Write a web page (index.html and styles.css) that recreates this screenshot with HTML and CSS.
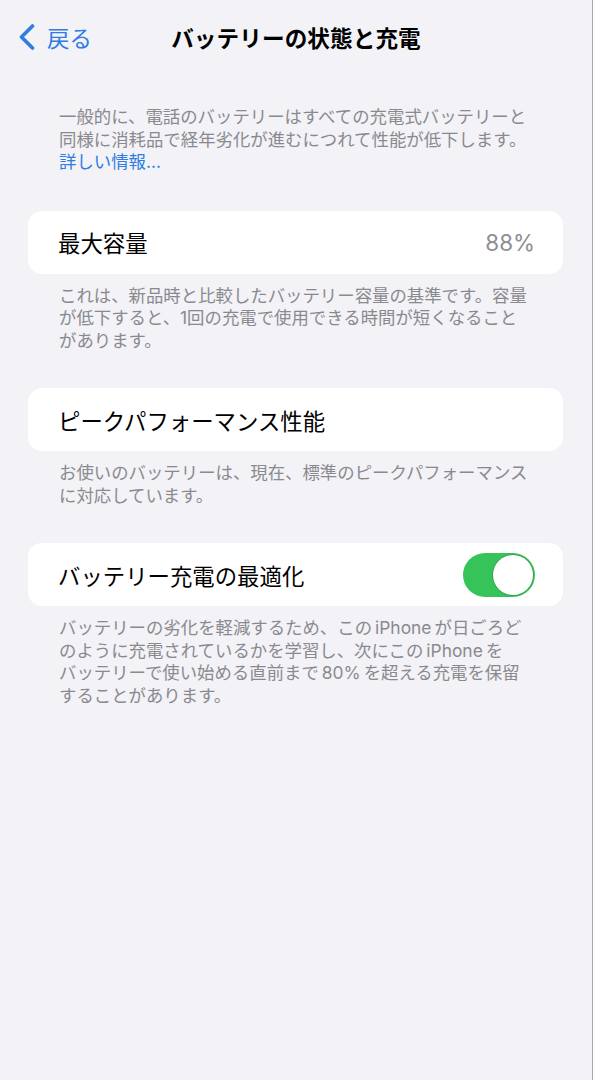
FILE: index.html
```
<!DOCTYPE html>
<html lang="ja">
<head>
    <meta charset="UTF-8">
    <meta name="viewport" content="width=device-width, initial-scale=1.0">
    <title>バッテリーの状態と充電</title>
    <link rel="stylesheet" href="styles.css">
</head>
<body>
    <div class="page">
        <div class="nav">
            <a class="back" href="#">
                <svg class="chevron" width="16" height="26" viewBox="0 0 16 26">
                    <path d="M13.5 2 L2.5 13 L13.5 24" fill="none" stroke="currentColor" stroke-width="3.6" stroke-linecap="round" stroke-linejoin="round"/>
                </svg>
                <span>戻る</span>
            </a>
            <h1>バッテリーの状態と充電</h1>
            <div></div>
        </div>

        <p class="intro">
            一般的に、電話のバッテリーはすべての充電式バッテリーと<br>
            同様に消耗品で経年劣化が進むにつれて性能が低下します。<br>
            <a href="#">詳しい情報...</a>
        </p>

        <div class="section">
            <div class="card">
                <span class="label">最大容量</span>
                <span class="value">88%</span>
            </div>
            <p class="note">
                これは、新品時と比較したバッテリー容量の基準です。容量<br>
                が低下すると、1回の充電で使用できる時間が短くなること<br>
                があります。
            </p>
        </div>

        <div class="section">
            <div class="card">
                <span class="label">ピークパフォーマンス性能</span>
            </div>
            <p class="note">
                お使いのバッテリーは、現在、標準のピークパフォーマンス<br>
                に対応しています。
            </p>
        </div>

        <div class="section">
            <div class="card">
                <span class="label">バッテリー充電の最適化</span>
                <button class="toggle on" onclick="this.classList.toggle('on')"><span class="knob"></span></button>
            </div>
            <p class="note">
                バッテリーの劣化を軽減するため、この<span class="latin">iPhone</span>が日ごろど<br>
                のように充電されているかを学習し、次にこの<span class="latin">iPhone</span>を<br>
                バッテリーで使い始める直前まで<span class="latin">80%</span>を超える充電を保留<br>
                することがあります。
            </p>
        </div>
    </div>
</body>
</html>
```

FILE: styles.css
```
body {
    margin: 0;
    padding: 0;
    background-color: #f2f2f7;
    font-family: Inter, "Noto Sans CJK JP", sans-serif;
    color: #000;
}
.page {
    min-height: 100vh;
    border-right: 1px solid #a8a8ad;
    box-sizing: border-box;
}
.nav {
    height: 74px;
    display: grid;
    grid-template-columns: 1fr auto 1fr;
    align-items: center;
}
.back {
    display: flex;
    align-items: center;
    gap: 12px;
    padding-left: 19px;
    color: #2f7de1;
    text-decoration: none;
    font-size: 22.4px;
}
.chevron {
    display: block;
}
h1 {
    margin: 0;
    font-size: 22.6px;
    font-weight: 700;
    letter-spacing: 0.1px;
}
.intro {
    margin: 32px 0 37px;
    padding-left: 59px;
    font-size: 17.4px;
    line-height: 22.5px;
    color: #8a8a8e;
}
.intro a {
    color: #2f7de1;
    text-decoration: none;
}
.section {
    margin-bottom: 36px;
}
.card {
    margin: 0 29px 0 28px;
    height: 63px;
    padding: 0 28px 0 30px;
    background: #fff;
    border-radius: 14px;
    display: flex;
    align-items: center;
    justify-content: space-between;
}
.label {
    font-size: 22.4px;
}
.value {
    font-size: 22.4px;
    color: #8e8e93;
}
.note {
    margin: 11px 0 0;
    padding-left: 59px;
    font-size: 17.4px;
    line-height: 22.5px;
    color: #8a8a8e;
}
/* latin words inside japanese text get a little air on both sides */
.latin {
    margin: 0 3px;
}
.toggle {
    width: 72px;
    height: 44px;
    padding: 2px;
    margin-right: 0;
    border: none;
    border-radius: 22px;
    background: #e4e4e9;
    display: flex;
    cursor: pointer;
}
.toggle.on {
    background: #36c45a;
    justify-content: flex-end;
}
.knob {
    width: 40px;
    height: 40px;
    border-radius: 50%;
    background: #fff;
    box-shadow: 0 0 0 1px rgba(40, 140, 60, 0.5);
}
```
